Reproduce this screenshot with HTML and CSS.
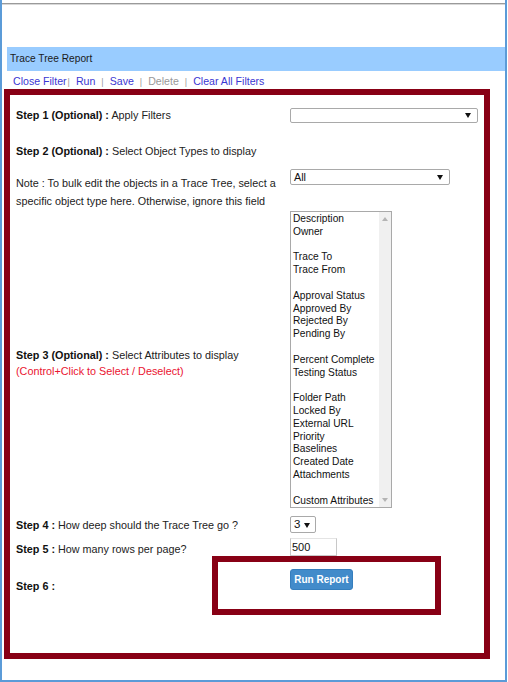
FILE: index.html
```html
<!DOCTYPE html>
<html>
<head>
<meta charset="utf-8">
<link rel="stylesheet" href="styles.css">
</head>
<body>
<div class="frame">
  <div class="topline"></div>
  <div class="titlebar">Trace Tree Report</div>
  <div class="links">
    <a class="lnk">Close Filter</a><span class="sep first">|</span><a class="lnk">Run</a><span class="sep">|</span><a class="lnk">Save</a><span class="sep">|</span><span class="lnk disabled">Delete</span><span class="sep">|</span><a class="lnk">Clear All Filters</a>
  </div>
  <div class="panel">
    <div class="row r1">
      <div class="label"><b>Step 1 (Optional) :</b> Apply Filters</div>
      <div class="ctrl"><div class="fsel w1"><span class="val"></span><svg class="arr" width="6" height="5" viewBox="0 0 6 5"><path d="M0 0H6L3 5Z" fill="#111"/></svg></div></div>
    </div>
    <div class="row r2">
      <div class="label"><b>Step 2 (Optional) :</b> Select Object Types to display</div>
      <div class="ctrl"></div>
    </div>
    <div class="row r3">
      <div class="label note">Note : To bulk edit the objects in a Trace Tree, select a specific object type here. Otherwise, ignore this field</div>
      <div class="ctrl"><div class="fsel w2"><span class="val">All</span><svg class="arr" width="6" height="5" viewBox="0 0 6 5"><path d="M0 0H6L3 5Z" fill="#111"/></svg></div></div>
    </div>
    <div class="row r4">
      <div class="label l4"><b>Step 3 (Optional) :</b> Select Attributes to display<br><span class="red">(Control+Click to Select / Deselect)</span></div>
      <div class="ctrl">
        <div class="listbox">
          <div class="items">
            <div>Description</div><div>Owner</div><div>&nbsp;</div>
            <div>Trace To</div><div>Trace From</div><div>&nbsp;</div>
            <div>Approval Status</div><div>Approved By</div><div>Rejected By</div><div>Pending By</div><div>&nbsp;</div>
            <div>Percent Complete</div><div>Testing Status</div><div>&nbsp;</div>
            <div>Folder Path</div><div>Locked By</div><div>External URL</div><div>Priority</div><div>Baselines</div><div>Created Date</div><div>Attachments</div><div>&nbsp;</div>
            <div>Custom Attributes</div>
          </div>
          <div class="scroll">
            <svg class="sup" width="6" height="4" viewBox="0 0 6 4"><path d="M0 4L3 0L6 4Z" fill="#b4b4b4"/></svg>
            <svg class="sdown" width="6" height="4" viewBox="0 0 6 4"><path d="M0 0H6L3 4Z" fill="#b4b4b4"/></svg>
          </div>
        </div>
      </div>
    </div>
    <div class="row r5">
      <div class="label"><b>Step 4 :</b> How deep should the Trace Tree go ?</div>
      <div class="ctrl"><div class="fsel w3"><span class="val">3</span><svg class="arr" width="6" height="5" viewBox="0 0 6 5"><path d="M0 0H6L3 5Z" fill="#111"/></svg></div></div>
    </div>
    <div class="row r6">
      <div class="label"><b>Step 5 :</b> How many rows per page?</div>
      <div class="ctrl"><div class="finput">500</div></div>
    </div>
    <div class="row r7">
      <div class="label l7"><b>Step 6 :</b></div>
      <div class="ctrl"><button class="btn">Run Report</button></div>
    </div>
    <div class="mark"></div>
  </div>
</div>
</body>
</html>
```
FILE: styles.css
```css
html, body {
  margin: 0;
  padding: 0;
  background: #fff;
}
body {
  font-family: "Liberation Sans", Arial, sans-serif;
  color: #222;
}
.frame {
  width: 507px;
  height: 682px;
  box-sizing: border-box;
  border-left: 2px solid #5b9bd8;
  border-right: 2px solid #5b9bd8;
  border-bottom: 2px solid #5b9bd8;
  padding-top: 3px;
  overflow: hidden;
}
.topline {
  height: 1px;
  border-top: 1px solid #9a9a9a;
  background: #d8d8d8;
}
.titlebar {
  margin-top: 42px;
  margin-left: 5px;
  height: 24px;
  line-height: 24px;
  background: #99ccff;
  padding-left: 3px;
  font-size: 10.2px;
  color: #1a1a1a;
}
.links {
  height: 18px;
  box-sizing: border-box;
  padding-top: 3px;
  padding-left: 11px;
  line-height: 15px;
  font-size: 10.6px;
  white-space: nowrap;
}
.lnk {
  color: #3a36d2;
}
.lnk.disabled {
  color: #999;
}
.sep {
  color: #9a9a9a;
  font-size: 9px;
  margin: 0 6px 0 6px;
}
.sep.first {
  margin-left: 1px;
}
.panel {
  position: relative;
  margin-left: 2px;
  width: 486px;
  height: 570px;
  box-sizing: border-box;
  border: 6px solid #880015;
  padding-top: 2px;
}
.row {
  display: grid;
  grid-template-columns: 280px 1fr;
}
.label {
  padding-left: 6px;
  font-size: 10.8px;
  line-height: 16px;
  align-self: center;
}
.label b {
  color: #111;
}
.r1 { height: 36px; }
.r2 { height: 36px; }
.r3 { height: 42px; }
.r4 { height: 297px; }
.r5 { height: 33px; }
.r6 { height: 16px; }
.r7 { height: 58px; }
.ctrl {
  align-self: center;
}
.note {
  align-self: start;
  padding-top: 5px;
  line-height: 18px;
  padding-right: 0;
}
.r3 .ctrl { align-self: start; }
.l4 {
  align-self: start;
  padding-top: 136px;
}
.r4 .ctrl { align-self: start; }
.red {
  color: #ea1430;
}
.fsel {
  position: relative;
  box-sizing: border-box;
  border: 1px solid #a9a9a9;
  border-radius: 2px;
  background: #fff;
  font-size: 10.8px;
  color: #111;
}
.fsel .val {
  padding-left: 3px;
}
.fsel .arr {
  position: absolute;
  right: 6px;
  top: 50%;
  margin-top: -2px;
}
.w1 {
  width: 188px;
  height: 15px;
  line-height: 13px;
}
.w2 {
  width: 160px;
  height: 16px;
  line-height: 14px;
}
.w3 {
  width: 26px;
  height: 17px;
  line-height: 15px;
  font-size: 11.5px;
}
.w3 .arr { right: 5px; }
.listbox {
  position: relative;
  width: 102px;
  height: 297px;
  box-sizing: border-box;
  border: 1px solid #a9a9a9;
  overflow: hidden;
  display: flex;
}
.items {
  flex: 1;
  padding: 1px 0 0 2px;
  font-size: 10.2px;
  line-height: 12.8px;
  white-space: nowrap;
  overflow: hidden;
  color: #111;
}
.scroll {
  position: relative;
  width: 12px;
  background: #f0f0f0;
}
.sup {
  position: absolute;
  left: 3px;
  top: 5px;
}
.sdown {
  position: absolute;
  left: 3px;
  bottom: 5px;
}
.r6 .ctrl {
  align-self: start;
  margin-top: -3px;
}
.finput {
  box-sizing: border-box;
  width: 47px;
  height: 18px;
  border: 1px solid #c8c8c8;
  border-top-color: #e4e4e4;
  line-height: 16px;
  padding-left: 1px;
  font-size: 11px;
  color: #111;
}
.l7 {
  align-self: start;
  padding-top: 21px;
}
.r7 .ctrl {
  align-self: start;
  margin-top: 12px;
}
.btn {
  display: block;
  width: 63px;
  height: 21px;
  padding: 0;
  margin: 0;
  border: 1px solid #357ebd;
  border-radius: 3px;
  background: #428bca;
  color: #fff;
  font-family: "Liberation Sans", Arial, sans-serif;
  font-size: 10px;
  font-weight: bold;
  line-height: 19px;
  text-align: center;
}
.mark {
  position: absolute;
  left: 202px;
  top: 461px;
  width: 229px;
  height: 59px;
  box-sizing: border-box;
  border: 6px solid #880015;
}
```
